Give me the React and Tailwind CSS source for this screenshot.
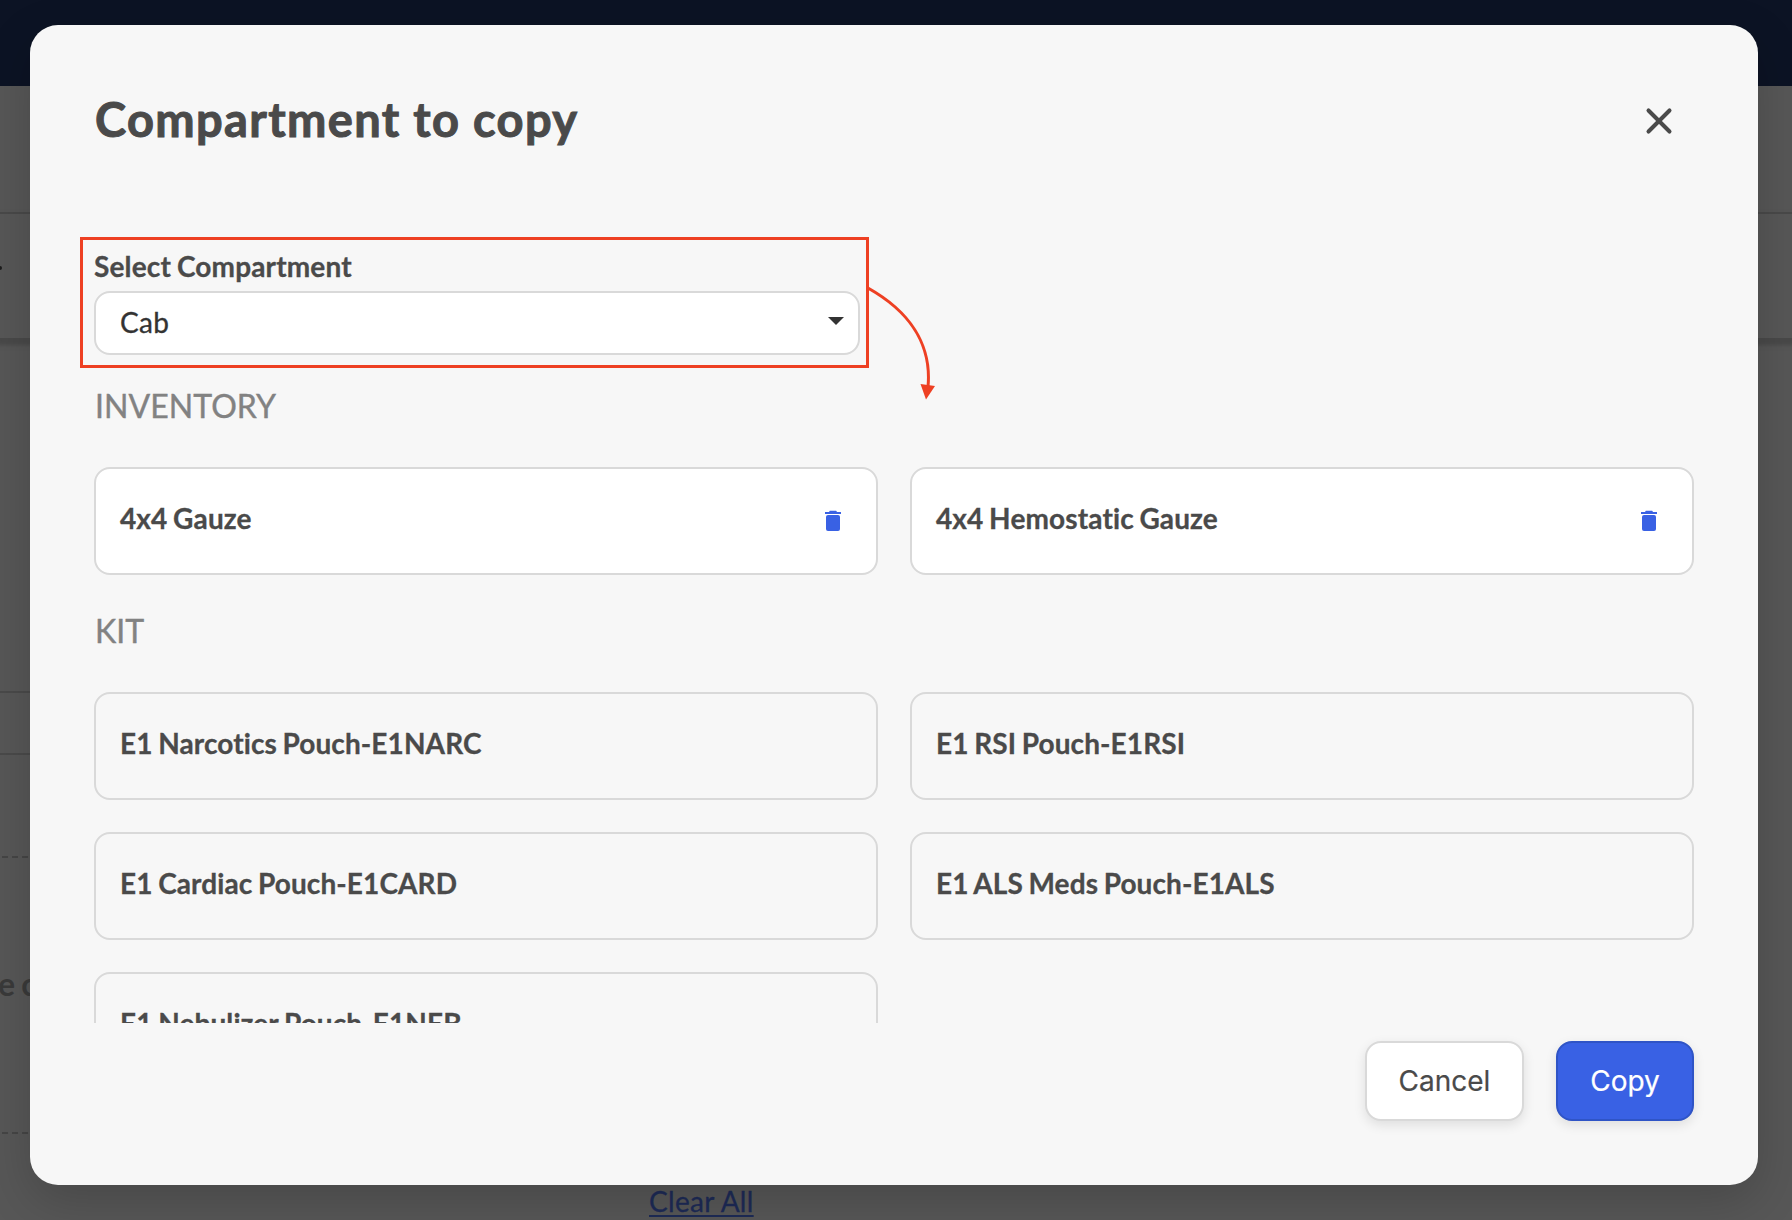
import React, { useState } from "react";
import { X } from "lucide-react";

const INVENTORY = ["4x4 Gauze", "4x4 Hemostatic Gauze"];

const KITS = [
  "E1 Narcotics Pouch-E1NARC",
  "E1 RSI Pouch-E1RSI",
  "E1 Cardiac Pouch-E1CARD",
  "E1 ALS Meds Pouch-E1ALS",
  "E1 Nebulizer Pouch-E1NEB",
];

function TrashIcon() {
  return (
    <svg width="16" height="22" viewBox="0 0 16 22" className="fill-[#3961e4]">
      <path d="M0 2h4l.8-1.3h6.4L12 2h4v2H0z" />
      <path d="M1 7a2 2 0 0 1 2-2h10a2 2 0 0 1 2 2v12a2 2 0 0 1-2 2H3a2 2 0 0 1-2-2z" />
    </svg>
  );
}

function SectionTitle({ children }) {
  return (
    <h2 className="pl-px text-[32px] leading-12 tracking-[0.05px] text-[#828282] [-webkit-text-stroke:0.4px]">
      {children}
    </h2>
  );
}

function InventoryCard({ name, onRemove }) {
  return (
    <div className="flex h-27 items-start justify-between rounded-2xl border-2 border-[#d9d9d9] bg-white pt-7 pr-[35px] pl-6">
      <span className="text-[28px] leading-[42px] font-bold tracking-[0.13px] [word-spacing:-1.3px] [-webkit-text-stroke:0.3px]">
        {name}
      </span>
      <button onClick={onRemove} className="mt-[13px]">
        <TrashIcon />
      </button>
    </div>
  );
}

function KitCard({ name }) {
  return (
    <div className="h-27 rounded-2xl border-2 border-[#d9d9d9] pt-7 pl-6 text-[28px] leading-[42px] font-bold tracking-[0.1px] [word-spacing:-1.3px] [-webkit-text-stroke:0.3px]">
      {name}
    </div>
  );
}

// Page that sits dimmed behind the modal
function Backdrop() {
  return (
    <div className="flex h-full flex-col bg-[#575757]">
      <div className="h-[86px] shrink-0 bg-[#0c1324]" />
      <div className="h-32 shrink-0 border-b-2 border-[#4a4a4a]" />
      <div className="flex h-[124px] shrink-0 items-center shadow-[0_4px_4px_3px_#494949]">
        <div className="-mt-4 h-1 w-[2px] rounded-r bg-[#1c1c1c]" />
      </div>
      <div className="h-[355px] w-[1400px] shrink-0 border-b-2 border-[#4a4a4a]" />
      <div className="h-[62px] w-[1400px] shrink-0 border-b-2 border-[#4a4a4a]" />
      <div className="mt-[101px] -ml-2 h-[278px] w-[1400px] shrink-0 border-y-2 border-dashed border-[#454545] pt-[102px] pl-2">
        <p className="-ml-[2px] text-[32px] leading-12 font-bold text-[#3a3a3a] [word-spacing:-1.5px]">e c</p>
      </div>
      <div className="mt-[46px] h-[39px] pl-[649px]">
        <a className="text-[28px] leading-[42px] tracking-[0.3px] text-[#1d2a56] underline decoration-2 underline-offset-3 [-webkit-text-stroke:0.3px]">
          Clear All
        </a>
      </div>
    </div>
  );
}

export default function App() {
  const [items, setItems] = useState(INVENTORY);

  return (
    <div className="relative h-[1220px] w-[1792px] overflow-hidden font-['Lato',sans-serif] text-[#4a4a4a] [font-variant-ligatures:none]">
      <Backdrop />

      <div className="absolute inset-0 pt-[25px] pl-[30px]">
        <div className="flex h-[1160px] w-[1728px] flex-col rounded-[28px] bg-[#f7f7f7] px-16 shadow-[0_16px_48px_rgba(0,0,0,0.18)]">
          <div className="flex h-[212px] shrink-0 items-start justify-between pt-[59px] pr-[14px]">
            <h1 className="pl-px text-[47px] leading-[70px] font-bold tracking-[1.35px] [-webkit-text-stroke:1px]">
              Compartment to copy
            </h1>
            <button className="mt-4">
              <X size={42} strokeWidth={2.3} />
            </button>
          </div>

          <div className="relative -ml-[14px] h-[131px] w-[789px] shrink-0 border-3 border-[#ee4023] pt-[5px] pl-[11px]">
            <label className="block text-[28px] leading-[42px] font-bold tracking-[0.15px] [word-spacing:-1px] [-webkit-text-stroke:0.3px]">
              Select Compartment
            </label>
            <div className="mt-1 flex h-16 w-[766px] items-center justify-between rounded-2xl border-2 border-[#d9d9d9] bg-white pr-[14px] pl-6">
              <span className="pb-[2px] text-[28px] leading-[42px] tracking-[0.3px] text-[#333] [-webkit-text-stroke:0.3px]">
                Cab
              </span>
              <svg width="16" height="8" viewBox="0 0 16 8" className="-mt-1 fill-[#333]">
                <path d="M0 0h16L8 8z" />
              </svg>
            </div>
            <svg width="72" height="116" viewBox="0 0 72 116" className="absolute top-[46px] left-[785px]">
              <path d="M0 2C41 25 64 58 60 101" fill="none" stroke="#ee4023" strokeWidth="3" />
              <path d="M52.5 98 67 100 58 113.5z" fill="#ee4023" />
            </svg>
          </div>

          <div className="mt-[14px] h-[641px] shrink-0 overflow-hidden">
            <SectionTitle>INVENTORY</SectionTitle>
            <div className="mt-[37px] grid grid-cols-2 gap-8">
              {items.map((name) => (
                <InventoryCard
                  key={name}
                  name={name}
                  onRemove={() => setItems(items.filter((item) => item !== name))}
                />
              ))}
            </div>

            <div className="mt-8">
              <SectionTitle>KIT</SectionTitle>
            </div>
            <div className="mt-[37px] grid grid-cols-2 gap-8">
              {KITS.map((name) => (
                <KitCard key={name} name={name} />
              ))}
            </div>
          </div>

          <div className="mt-[18px] flex justify-end gap-8 font-['Inter',sans-serif] text-[28px]">
            <button className="h-20 w-[159px] rounded-2xl border-2 border-[#d9d9d9] bg-white shadow-[0_4px_12px_rgba(0,0,0,0.1)] [-webkit-text-stroke:0.2px]">
              Cancel
            </button>
            <button className="h-20 w-[138px] rounded-2xl border-2 border-[#2f54c6] bg-[#3961e4] text-white shadow-[0_4px_12px_rgba(0,0,0,0.1)] [-webkit-text-stroke:0.2px]">
              Copy
            </button>
          </div>
        </div>
      </div>
    </div>
  );
}
